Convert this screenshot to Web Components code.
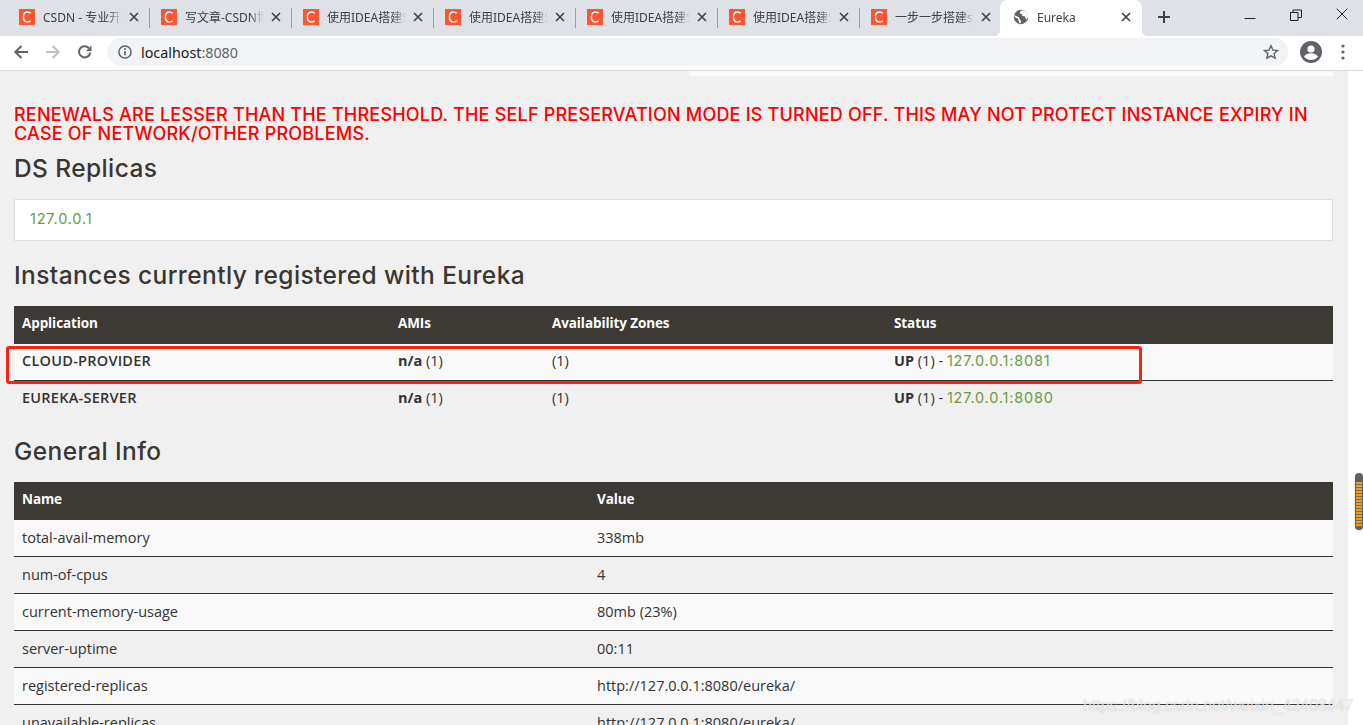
<!DOCTYPE html>
<html><head><meta charset="utf-8">
<style>
html,body{margin:0;padding:0;height:725px;overflow:hidden;background:#f0f0f0}
body{display:flex;flex-direction:column;font-family:"Open Sans",sans-serif;position:relative}
</style></head><body>
<chrome-tabstrip>
<browser-tab icon="c" label="CSDN - 专业开发者社区"></browser-tab>
<browser-tab icon="c" label="写文章-CSDN博客"></browser-tab>
<browser-tab icon="c" label="使用IDEA搭建SpringCloud"></browser-tab>
<browser-tab icon="c" label="使用IDEA搭建SpringCloud"></browser-tab>
<browser-tab icon="c" label="使用IDEA搭建SpringCloud"></browser-tab>
<browser-tab icon="c" label="使用IDEA搭建SpringCloud"></browser-tab>
<browser-tab icon="c" label="一步一步搭建spring"></browser-tab>
<browser-tab icon="globe" label="Eureka" active></browser-tab>
</chrome-tabstrip>
<chrome-toolbar></chrome-toolbar>
<page-frame>
  <div style="width:644px;height:5px;background:#f9f9f9;margin-left:auto"></div>
  <warning-text>RENEWALS ARE LESSER THAN THE THRESHOLD. THE SELF PRESERVATION MODE IS TURNED OFF. THIS MAY NOT PROTECT INSTANCE EXPIRY IN<br>CASE OF NETWORK/OTHER PROBLEMS.</warning-text>
  <section-title style="margin-top:10px">DS Replicas</section-title>
  <replica-panel>127.0.0.1</replica-panel>
  <section-title style="margin-top:19px">Instances currently registered with Eureka</section-title>
  <data-table cols="376px 154px 342px 1fr">
    <table-row head><b>Application</b><b>AMIs</b><b>Availability Zones</b><b>Status</b></table-row>
    <table-row><b>CLOUD-PROVIDER</b><span><b class="t">n/a</b> (1)</span><span>(1)</span><span><b class="t">UP</b> (1) - <link-text>127.0.0.1:8081</link-text></span></table-row>
    <table-row noline><b>EUREKA-SERVER</b><span><b class="t">n/a</b> (1)</span><span>(1)</span><span><b class="t">UP</b> (1) - <link-text>127.0.0.1:8080</link-text></span></table-row>
  </data-table>
  <section-title style="margin-top:18px">General Info</section-title>
  <data-table cols="575px 1fr" style="--pb:0px">
    <table-row head><b>Name</b><b>Value</b></table-row>
    <table-row><span>total-avail-memory</span><span>338mb</span></table-row>
    <table-row><span>num-of-cpus</span><span>4</span></table-row>
    <table-row><span>current-memory-usage</span><span>80mb (23%)</span></table-row>
    <table-row><span>server-uptime</span><span>00:11</span></table-row>
    <table-row><span>registered-replicas</span><span>http://127.0.0.1:8080/eureka/</span></table-row>
    <table-row><span>unavailable-replicas</span><span>http://127.0.0.1:8080/eureka/</span></table-row>
  </data-table>
</page-frame>
<annotation-box></annotation-box>
<water-mark>https://blog.csdn.net/weixin_42408447</water-mark>
<script>
const C_ICON=`<svg width="16" height="16" viewBox="0 0 16 16"><rect width="16" height="16" fill="#fc5531"/><path d="M11.6 4.300C10.800 3.400 9.700 3 8.500 3 6 3 4.400 5 4.400 8s1.600 5 4.100 5c1.200 0 2.300-.4 3.100-1.300" fill="none" stroke="#fff" stroke-width="1.500"/></svg>`;
const GLOBE_ICON=`<svg width="16" height="16" viewBox="0 0 16 16"><circle cx="8" cy="8" r="7.200" fill="#5f6368"/><path d="M1.500 6.300 6 8.200l.3 1.700 1.500 1.300v2.800L6.500 14.500 5 9.800 1.500 8zM9 1.200 6.700 3l.6 1.700 1.800.5.300 1.800 2.400.3.800 1.800.9 1.600 1.600-2.700-.6-3.800L11.500 1.800z" fill="#fff"/></svg>`;
const X_ICON=`<svg width="10" height="10" viewBox="0 0 10 10" style="display:block"><path d="M1 1l8 8M9 1l-8 8" stroke="#3c4043" stroke-width="1.600" fill="none"/></svg>`;

function def(name,css,html,setup){
  customElements.define(name,class extends HTMLElement{
    constructor(){super();const s=this.attachShadow({mode:'open'});s.innerHTML=`<style>${css}</style>${html}`;if(setup)this._setup=setup;}
    connectedCallback(){if(this._setup)this._setup(this.shadowRoot,this);}
  });
}

def('browser-tab',`
:host{display:block;width:142px;height:36px;position:relative;flex:none;font:12px "Noto Sans","Noto Sans CJK SC",sans-serif;color:#3c4043}
.sep{position:absolute;right:0;top:8px;width:1px;height:20px;background:#9aa0a6}
.wrap{display:flex;align-items:center;height:34px;padding-left:11px;position:relative}
.ico{width:16px;height:16px;flex:none;margin-right:8px}
.ico svg{display:block}
.txt{width:79px;overflow:hidden;white-space:nowrap;-webkit-mask-image:linear-gradient(90deg,#000 82%,transparent 100%);mask-image:linear-gradient(90deg,#000 82%,transparent 100%)}
.x{margin-left:7px;flex:none}
.shape{display:none}
:host([active]) .sep{display:none}
:host([active]) .shape{display:block;position:absolute;left:-2px;width:142px;top:0;height:36px;background:#fff;border-radius:8px 8px 0 0}
:host([active]) .shape::before,:host([active]) .shape::after{content:"";position:absolute;bottom:0;width:6px;height:6px}
:host([active]) .shape::before{left:-6px;background:radial-gradient(circle at 0 0,transparent 6px,#fff 6.500px)}
:host([active]) .shape::after{right:-6px;background:radial-gradient(circle at 100% 0,transparent 6px,#fff 6.500px)}
:host([active]) .x{margin-left:5px}
`,`<div class="shape"></div><div class="wrap"><span class="ico"></span><span class="txt"></span><span class="x">${X_ICON}</span></div><div class="sep"></div>`,
(s,h)=>{s.querySelector('.ico').innerHTML=h.getAttribute('icon')==='globe'?GLOBE_ICON:C_ICON;s.querySelector('.txt').textContent=h.getAttribute('label');});

def('chrome-tabstrip',`
:host{display:flex;height:36px;flex:none;background:#dee1e6;padding-left:8px;overflow:hidden;align-items:flex-start}
.plus{width:14px;height:14px;margin:10px 0 0 13px;flex:none}
.ctl{margin-left:auto;display:flex;margin-right:-2px}
.ctl span{width:46px;height:30px;display:flex;align-items:center;justify-content:center;margin-top:0}
svg{display:block}
`,`<slot></slot>
<svg class="plus" viewBox="0 0 14 14"><path d="M7 1v12M1 7h12" stroke="#3c4043" stroke-width="2" fill="none"/></svg>
<div class="ctl">
<span><svg width="12" height="12" viewBox="0 0 12 12" style="margin-top:1px"><path d="M.5 8.500h11" stroke="#202124" stroke-width="1" fill="none"/></svg></span>
<span><svg width="12" height="12" viewBox="0 0 12 12" style="margin-top:-1px"><path d="M.5 3.500h7.500v8h-7.500zM3 3.500V1h8.500v7.500H8" stroke="#202124" stroke-width="1" fill="none"/></svg></span>
<span><svg width="12" height="12" viewBox="0 0 12 12" style="margin-top:-2px"><path d="M.7.700l10.600 10.600M11.300.700.700 11.300" stroke="#202124" stroke-width="1" fill="none"/></svg></span>
</div>`);

def('chrome-toolbar',`
:host{display:flex;align-items:center;height:32px;padding-bottom:2px;flex:none;background:#fff;border-bottom:1px solid #d6d7d9;padding-left:5px;font:14.300px "Noto Sans",sans-serif}
.b{width:32px;height:28px;display:flex;align-items:center;justify-content:center;flex:none}
svg{display:block}
.omni{width:1181px;height:28px;margin:0 7px 0 6px;border-radius:14px;background:#f1f3f4;display:flex;align-items:center;flex:none;color:#202124}
.omni .i{margin-left:11px;margin-right:9px}
.omni .port{color:#5f6368}
.omni .star{margin-left:auto;margin-right:9px}
`,`
<span class="b"><svg width="16" height="16" viewBox="0 0 16 16"><path d="M15 8H2.500M8.500 2 2.300 8l6.200 6" stroke="#5f6368" stroke-width="2" fill="none"/></svg></span>
<span class="b"><svg width="16" height="16" viewBox="0 0 16 16"><path d="M1 8h12.500M7.500 2l6.200 6-6.200 6" stroke="#bdc1c6" stroke-width="2" fill="none"/></svg></span>
<span class="b"><svg width="16" height="16" viewBox="0 0 16 16"><path d="M13.200 8.500A5.600 5.600 0 1 1 11.800 4" stroke="#5f6368" stroke-width="2" fill="none"/><path d="M14.500 1.500v5.500H9z" fill="#5f6368"/></svg></span>
<div class="omni">
<svg class="i" width="14" height="14" viewBox="0 0 14 14"><circle cx="7" cy="7" r="6.100" fill="none" stroke="#5f6368" stroke-width="1.500"/><path d="M7 6v4.300" stroke="#5f6368" stroke-width="1.600"/><circle cx="7" cy="4" r="1" fill="#5f6368"/></svg>
<span>localhost<span class="port">:8080</span></span>
<svg class="star" width="16" height="16" viewBox="0 0 16 16"><path d="M8 1.800l1.900 4.300 4.700.4-3.500 3.100 1 4.600L8 11.800l-4.100 2.400 1-4.600L1.400 6.500l4.700-.4z" fill="none" stroke="#5f6368" stroke-width="1.400"/></svg>
</div>
<span class="b"><svg width="22" height="22" viewBox="0 0 22 22"><circle cx="11" cy="11" r="11" fill="#5f6368"/><circle cx="11" cy="8" r="3.600" fill="#fff"/><path d="M4 15.500c1.500-2.400 4.500-3.300 7-3.300s5.500.9 7 3.300c-1.500 2.100-4 3.500-7 3.500s-5.500-1.400-7-3.500z" fill="#fff"/></svg></span>
<span class="b"><svg width="4" height="16" viewBox="0 0 4 16"><circle cx="2" cy="2" r="1.600" fill="#5f6368"/><circle cx="2" cy="8" r="1.600" fill="#5f6368"/><circle cx="2" cy="14" r="1.600" fill="#5f6368"/></svg></span>
`);

def('page-frame',`
:host{display:flex;flex:1;min-height:0;overflow:hidden}
.content{flex:1;min-width:0;padding:0 15px 0 14px;overflow:hidden;color:#333}
.bar{width:15px;flex:none;background:#fff;padding-top:402px;box-sizing:border-box}
.thumb{display:block;width:8px;height:57px;margin-left:7px;box-sizing:border-box;border-radius:4px;padding:9px 1px 3px;background:#5f5f5f;box-shadow:0 1px 3px rgba(0,0,0,.2)}
.thumb i{display:block;height:100%;background:repeating-linear-gradient(180deg,#f29a1e 0 2px,#7a6a50 2px 3px)}
`,`<div class="content"><slot></slot></div><div class="bar"><span class="thumb"><i></i></span></div>`);

def('warning-text',`:host{display:block;margin-top:29px;font:500 18px/19px Inter,sans-serif;color:#ff0000;white-space:nowrap;letter-spacing:.2px}`,`<slot></slot>`);
def('section-title',`:host{display:block;height:30px;margin-bottom:16px;font:500 24.500px/30px Inter,sans-serif;letter-spacing:.4px;color:#3a3632;white-space:nowrap}`,`<slot></slot>`);
def('replica-panel',`:host{display:block;height:42px;box-sizing:border-box;background:#fff;border:1px solid #ddd;padding:0 15px;font:14.500px/38px Inter,sans-serif;letter-spacing:.8px;color:#6b9b40}`,`<slot></slot>`);
def('link-text',`:host{display:inline;font-family:Inter,sans-serif;letter-spacing:.8px;color:#6b9b40}`,`<slot></slot>`);
def('data-table',`:host{display:block}`,`<slot></slot>`,(s,h)=>{h.style.setProperty('--cols',h.getAttribute('cols'));});
def('table-row',`
:host{display:grid;grid-template-columns:var(--cols);height:37px;box-sizing:border-box;padding-bottom:var(--pb,2px);border-bottom:1px solid #353535;align-items:center;font:14.500px/18px "Open Sans",sans-serif;color:#333}
:host(:nth-child(even)){background:#f9f9f9}
:host([head]){height:38px;padding-bottom:4px;border-bottom:0;background:#3d3934;color:#fff;font-size:13.500px}
:host([noline]){border-bottom:0;padding-bottom:3px}
::slotted(*){padding-left:8px;white-space:nowrap}
::slotted(b){font-weight:600;letter-spacing:.25px}
:host([head]) ::slotted(b){font-weight:700;letter-spacing:-.1px}
`,`<slot></slot>`);
def('annotation-box',`:host{position:absolute;left:6px;top:346px;width:1136px;height:38px;box-sizing:border-box;border:3px solid #ff2015;border-radius:3px;pointer-events:none}`,``);
def('water-mark',`:host{position:absolute;left:1083px;top:696px;font:15.900px/20px "Liberation Sans",sans-serif;color:rgba(255,255,255,.7);text-shadow:0 0 1px rgba(110,110,110,.45);white-space:nowrap}`,`<slot></slot>`);
</script>
</body></html>
